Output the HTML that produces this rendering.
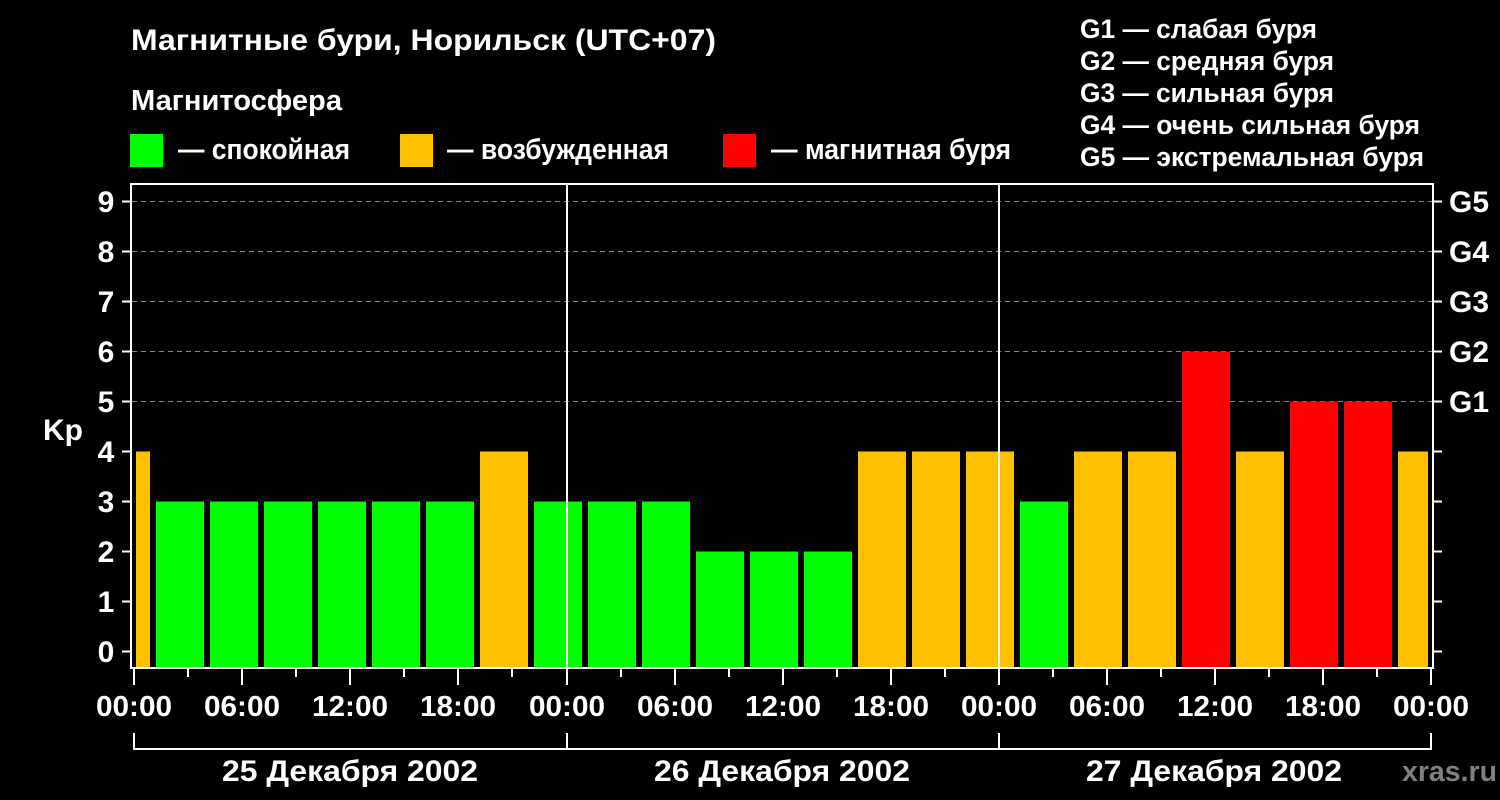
<!DOCTYPE html>
<html><head><meta charset="utf-8"><style>
html,body{margin:0;padding:0;background:#000;}
svg{display:block}
text{font-family:"Liberation Sans","DejaVu Sans",sans-serif;font-weight:bold;fill:#fff}
</style></head><body>
<svg width="1500" height="800" viewBox="0 0 1500 800" xmlns="http://www.w3.org/2000/svg">
<rect width="1500" height="800" fill="#000"/>
<text x="131" y="50" font-size="30" textLength="585" lengthAdjust="spacingAndGlyphs">Магнитные бури, Норильск (UTC+07)</text>
<text x="131" y="110" font-size="29" textLength="211" lengthAdjust="spacingAndGlyphs">Магнитосфера</text>
<rect x="130" y="134" width="33" height="33" fill="#00ff00"/>
<text x="178" y="159" font-size="29" textLength="172" lengthAdjust="spacingAndGlyphs">— спокойная</text>
<rect x="400" y="134" width="33" height="33" fill="#ffc000"/>
<text x="447" y="159" font-size="29" textLength="222" lengthAdjust="spacingAndGlyphs">— возбужденная</text>
<rect x="723" y="134" width="33" height="33" fill="#ff0000"/>
<text x="771" y="159" font-size="29" textLength="240" lengthAdjust="spacingAndGlyphs">— магнитная буря</text>
<g font-size="27">
<text x="1080" y="38" textLength="237" lengthAdjust="spacingAndGlyphs">G1 — слабая буря</text>
<text x="1080" y="70" textLength="254" lengthAdjust="spacingAndGlyphs">G2 — средняя буря</text>
<text x="1080" y="102" textLength="254" lengthAdjust="spacingAndGlyphs">G3 — сильная буря</text>
<text x="1080" y="134" textLength="340" lengthAdjust="spacingAndGlyphs">G4 — очень сильная буря</text>
<text x="1080" y="166" textLength="344" lengthAdjust="spacingAndGlyphs">G5 — экстремальная буря</text>
</g>
<g stroke="#888" stroke-width="1" stroke-dasharray="5,4">
<line x1="132" x2="1432" y1="201.5" y2="201.5"/>
<line x1="132" x2="1432" y1="251.5" y2="251.5"/>
<line x1="132" x2="1432" y1="301.5" y2="301.5"/>
<line x1="132" x2="1432" y1="351.5" y2="351.5"/>
<line x1="132" x2="1432" y1="401.5" y2="401.5"/>
</g>
<g>
<rect x="136" y="451.5" width="14" height="216" fill="#ffc000"/>
<rect x="156" y="501.5" width="48" height="166" fill="#00ff00"/>
<rect x="210" y="501.5" width="48" height="166" fill="#00ff00"/>
<rect x="264" y="501.5" width="48" height="166" fill="#00ff00"/>
<rect x="318" y="501.5" width="48" height="166" fill="#00ff00"/>
<rect x="372" y="501.5" width="48" height="166" fill="#00ff00"/>
<rect x="426" y="501.5" width="48" height="166" fill="#00ff00"/>
<rect x="480" y="451.5" width="48" height="216" fill="#ffc000"/>
<rect x="534" y="501.5" width="48" height="166" fill="#00ff00"/>
<rect x="588" y="501.5" width="48" height="166" fill="#00ff00"/>
<rect x="642" y="501.5" width="48" height="166" fill="#00ff00"/>
<rect x="696" y="551.5" width="48" height="116" fill="#00ff00"/>
<rect x="750" y="551.5" width="48" height="116" fill="#00ff00"/>
<rect x="804" y="551.5" width="48" height="116" fill="#00ff00"/>
<rect x="858" y="451.5" width="48" height="216" fill="#ffc000"/>
<rect x="912" y="451.5" width="48" height="216" fill="#ffc000"/>
<rect x="966" y="451.5" width="48" height="216" fill="#ffc000"/>
<rect x="1020" y="501.5" width="48" height="166" fill="#00ff00"/>
<rect x="1074" y="451.5" width="48" height="216" fill="#ffc000"/>
<rect x="1128" y="451.5" width="48" height="216" fill="#ffc000"/>
<rect x="1182" y="351.5" width="48" height="316" fill="#ff0000"/>
<rect x="1236" y="451.5" width="48" height="216" fill="#ffc000"/>
<rect x="1290" y="401.5" width="48" height="266" fill="#ff0000"/>
<rect x="1344" y="401.5" width="48" height="266" fill="#ff0000"/>
<rect x="1398" y="451.5" width="30" height="216" fill="#ffc000"/>
</g>
<line x1="567" x2="567" y1="183" y2="668" stroke="#fff" stroke-width="2"/>
<line x1="999" x2="999" y1="183" y2="668" stroke="#fff" stroke-width="2"/>
<rect x="131" y="184" width="1302" height="484" fill="none" stroke="#fff" stroke-width="2"/>
<g stroke="#fff" stroke-width="2">
<line x1="122" x2="131" y1="201.5" y2="201.5"/><line x1="122" x2="131" y1="251.5" y2="251.5"/>
<line x1="122" x2="131" y1="301.5" y2="301.5"/><line x1="122" x2="131" y1="351.5" y2="351.5"/>
<line x1="122" x2="131" y1="401.5" y2="401.5"/><line x1="122" x2="131" y1="451.5" y2="451.5"/>
<line x1="122" x2="131" y1="501.5" y2="501.5"/><line x1="122" x2="131" y1="551.5" y2="551.5"/>
<line x1="122" x2="131" y1="601.5" y2="601.5"/><line x1="122" x2="131" y1="651.5" y2="651.5"/>
<line x1="1433" x2="1442" y1="201.5" y2="201.5"/><line x1="1433" x2="1442" y1="251.5" y2="251.5"/>
<line x1="1433" x2="1442" y1="301.5" y2="301.5"/><line x1="1433" x2="1442" y1="351.5" y2="351.5"/>
<line x1="1433" x2="1442" y1="401.5" y2="401.5"/><line x1="1433" x2="1442" y1="451.5" y2="451.5"/>
<line x1="1433" x2="1442" y1="501.5" y2="501.5"/><line x1="1433" x2="1442" y1="551.5" y2="551.5"/>
<line x1="1433" x2="1442" y1="601.5" y2="601.5"/><line x1="1433" x2="1442" y1="651.5" y2="651.5"/>
</g>
<g font-size="30" text-anchor="middle">
<text x="106" y="212">9</text><text x="106" y="262">8</text><text x="106" y="312">7</text>
<text x="106" y="362">6</text><text x="106" y="412">5</text><text x="106" y="462">4</text>
<text x="106" y="512">3</text><text x="106" y="562">2</text><text x="106" y="612">1</text>
<text x="106" y="662">0</text>
</g>
<text x="63" y="440" font-size="30" text-anchor="middle">Kp</text>
<g font-size="30">
<text x="1449" y="212">G5</text><text x="1449" y="262">G4</text><text x="1449" y="312">G3</text>
<text x="1449" y="362">G2</text><text x="1449" y="412">G1</text>
</g>
<g stroke="#fff" stroke-width="2">
<line x1="134" x2="134" y1="669" y2="685"/><line x1="188" x2="188" y1="669" y2="677"/>
<line x1="242" x2="242" y1="669" y2="685"/><line x1="296" x2="296" y1="669" y2="677"/>
<line x1="350" x2="350" y1="669" y2="685"/><line x1="404" x2="404" y1="669" y2="677"/>
<line x1="458" x2="458" y1="669" y2="685"/><line x1="512" x2="512" y1="669" y2="677"/>
<line x1="567" x2="567" y1="669" y2="685"/><line x1="621" x2="621" y1="669" y2="677"/>
<line x1="675" x2="675" y1="669" y2="685"/><line x1="729" x2="729" y1="669" y2="677"/>
<line x1="783" x2="783" y1="669" y2="685"/><line x1="837" x2="837" y1="669" y2="677"/>
<line x1="891" x2="891" y1="669" y2="685"/><line x1="945" x2="945" y1="669" y2="677"/>
<line x1="999" x2="999" y1="669" y2="685"/><line x1="1053" x2="1053" y1="669" y2="677"/>
<line x1="1107" x2="1107" y1="669" y2="685"/><line x1="1161" x2="1161" y1="669" y2="677"/>
<line x1="1215" x2="1215" y1="669" y2="685"/><line x1="1269" x2="1269" y1="669" y2="677"/>
<line x1="1323" x2="1323" y1="669" y2="685"/><line x1="1377" x2="1377" y1="669" y2="677"/>
<line x1="1431" x2="1431" y1="669" y2="685"/>
<line x1="133" x2="1432" y1="749" y2="749"/>
<line x1="134" x2="134" y1="733" y2="749"/><line x1="567" x2="567" y1="733" y2="749"/>
<line x1="999" x2="999" y1="733" y2="749"/><line x1="1431" x2="1431" y1="733" y2="749"/>
</g>
<g font-size="29" text-anchor="middle">
<text x="134" y="716" textLength="76" lengthAdjust="spacingAndGlyphs">00:00</text>
<text x="242" y="716" textLength="76" lengthAdjust="spacingAndGlyphs">06:00</text>
<text x="350" y="716" textLength="76" lengthAdjust="spacingAndGlyphs">12:00</text>
<text x="458" y="716" textLength="76" lengthAdjust="spacingAndGlyphs">18:00</text>
<text x="567" y="716" textLength="76" lengthAdjust="spacingAndGlyphs">00:00</text>
<text x="675" y="716" textLength="76" lengthAdjust="spacingAndGlyphs">06:00</text>
<text x="783" y="716" textLength="76" lengthAdjust="spacingAndGlyphs">12:00</text>
<text x="891" y="716" textLength="76" lengthAdjust="spacingAndGlyphs">18:00</text>
<text x="999" y="716" textLength="76" lengthAdjust="spacingAndGlyphs">00:00</text>
<text x="1107" y="716" textLength="76" lengthAdjust="spacingAndGlyphs">06:00</text>
<text x="1215" y="716" textLength="76" lengthAdjust="spacingAndGlyphs">12:00</text>
<text x="1323" y="716" textLength="76" lengthAdjust="spacingAndGlyphs">18:00</text>
<text x="1431" y="716" textLength="76" lengthAdjust="spacingAndGlyphs">00:00</text>
</g>
<g font-size="30" text-anchor="middle">
<text x="350" y="781" textLength="256" lengthAdjust="spacingAndGlyphs">25 Декабря 2002</text>
<text x="782" y="781" textLength="256" lengthAdjust="spacingAndGlyphs">26 Декабря 2002</text>
<text x="1214" y="781" textLength="256" lengthAdjust="spacingAndGlyphs">27 Декабря 2002</text>
</g>
<text x="1402" y="781" font-size="29" textLength="95" lengthAdjust="spacingAndGlyphs" style="fill:#808080">xras.ru</text>
</svg>
</body></html>
